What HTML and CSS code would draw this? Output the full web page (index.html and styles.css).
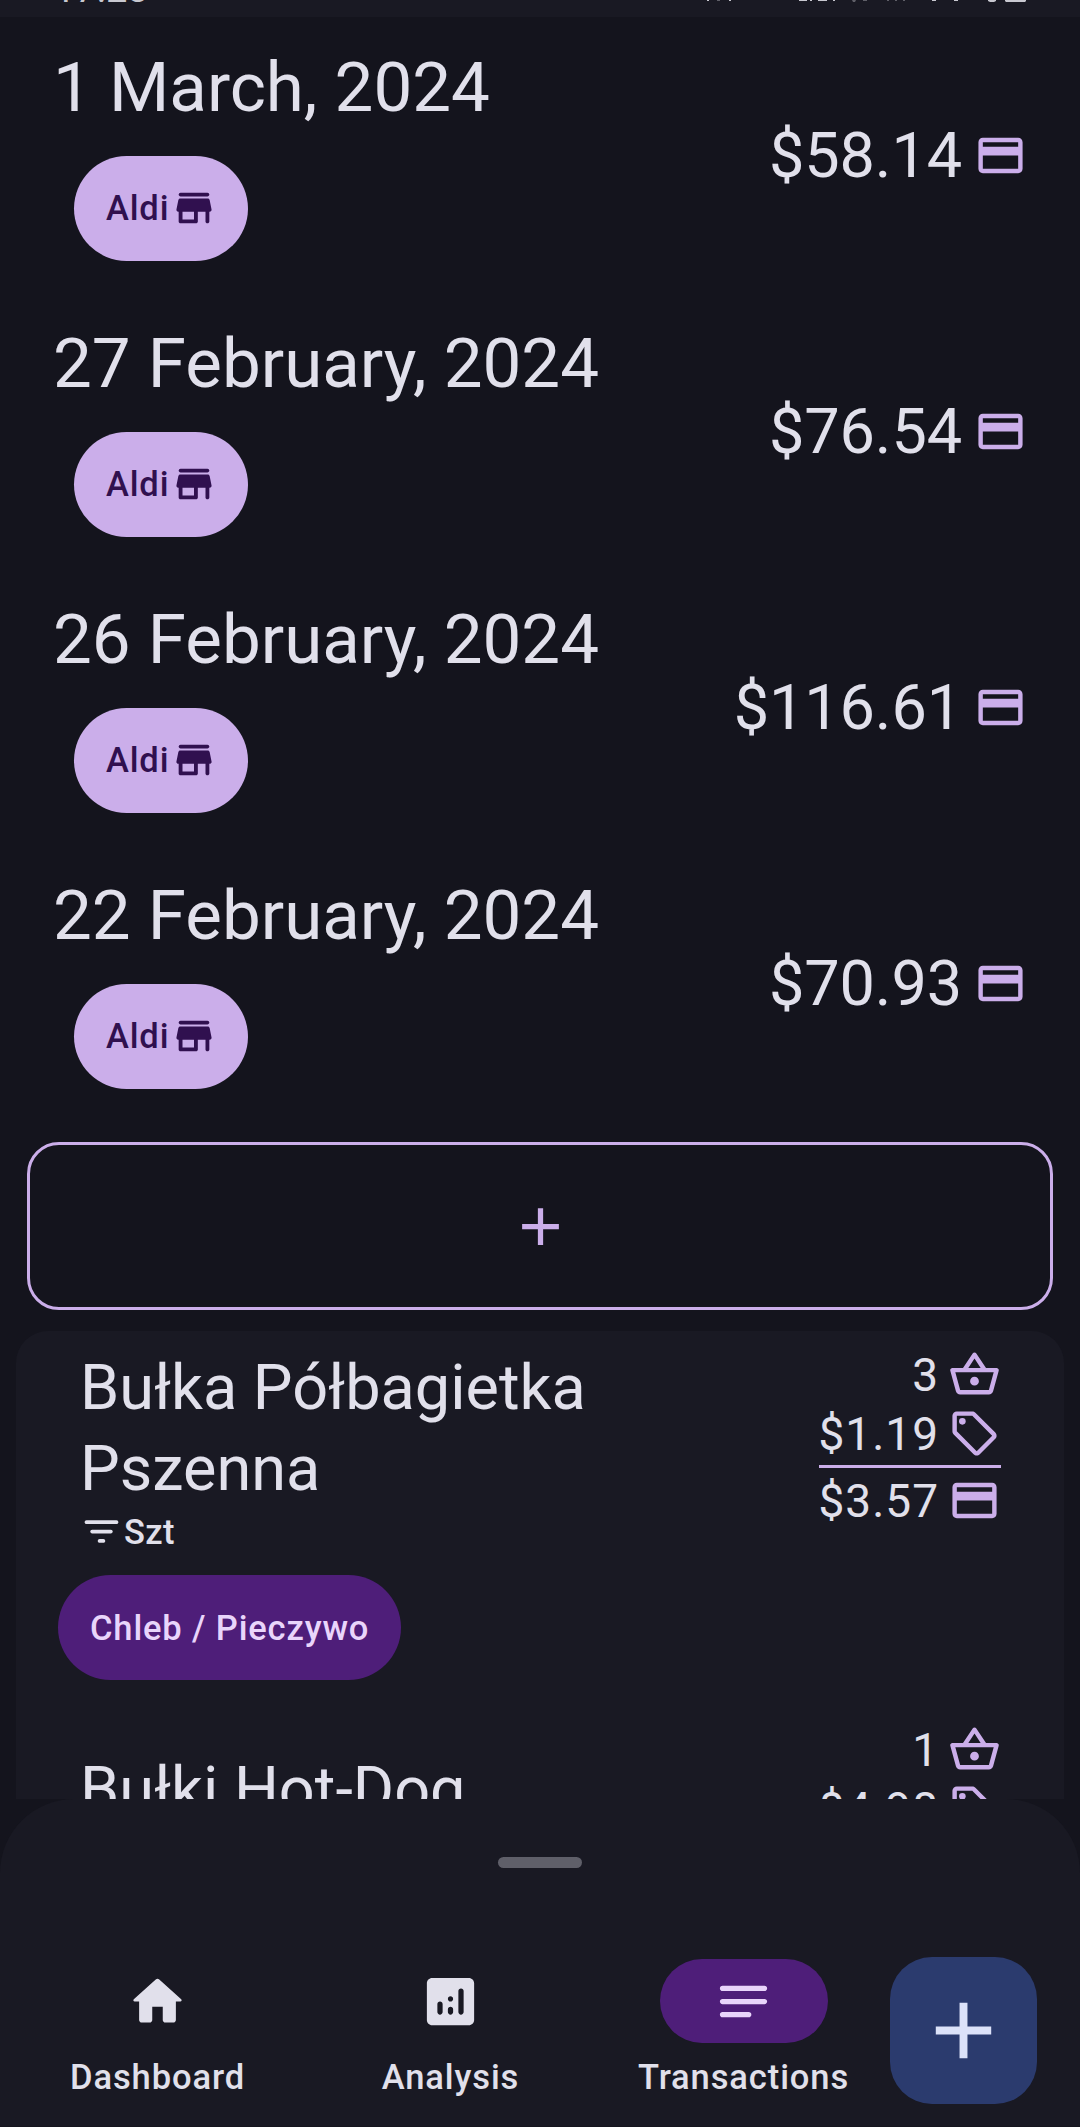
FILE: index.html
```
<!DOCTYPE html>
<html lang="en">
<head>
<meta charset="utf-8">
<title>Transactions</title>
<link rel="stylesheet" href="styles.css">
</head>
<body>
<svg class="sprite" aria-hidden="true">
  <symbol id="store" viewBox="0 0 24 24"><path d="M5 6h14c.55 0 1-.45 1-1s-.45-1-1-1H5c-.55 0-1 .45-1 1s.45 1 1 1zm15.16 1.8c-.09-.46-.5-.8-.98-.8H4.82c-.48 0-.89.34-.98.8l-1 5c-.12.62.35 1.2.98 1.2H4v5c0 .55.45 1 1 1h8c.55 0 1-.45 1-1v-5h4v5c0 .55.45 1 1 1s1-.45 1-1v-5h.18c.63 0 1.1-.58.98-1.2l-1-5zM12 18H6v-4h6v4z"/></symbol>
  <symbol id="card" viewBox="0 0 24 24"><path d="M20 4H4c-1.11 0-1.99.89-1.99 2L2 18c0 1.11.89 2 2 2h16c1.11 0 2-.89 2-2V6c0-1.11-.89-2-2-2zm0 14H4v-6h16v6zm0-10H4V6h16v2z"/></symbol>
  <symbol id="basket" viewBox="0 0 24 24"><path d="M22 9h-4.79l-4.38-6.56c-.19-.28-.51-.42-.83-.42s-.64.14-.83.43L6.79 9H2c-.55 0-1 .45-1 1 0 .09.01.18.04.27l2.54 9.27c.23.84 1 1.46 1.92 1.46h13c.92 0 1.69-.62 1.93-1.46l2.54-9.27L23 10c0-.55-.45-1-1-1zM12 4.8L14.8 9H9.2L12 4.8zM18.5 19l-12.99.01L3.31 11H20.7l-2.2 8zM12 13c-1.1 0-2 .9-2 2s.9 2 2 2 2-.9 2-2-.9-2-2-2z"/></symbol>
  <symbol id="tag" viewBox="0 0 24 24"><path d="M21.41 11.58l-9-9C12.05 2.22 11.55 2 11 2H4c-1.100 0-2 .9-2 2v7c0 .55.22 1.050.59 1.420l9 9c.36.36.86.58 1.410.58s1.050-.22 1.410-.59l7-7c.37-.36.59-.86.59-1.410s-.23-1.060-.59-1.420zM13 20.010L4 11V4h7v-.010l9 9-7 7.020z"/><circle cx="6.500" cy="6.500" r="1.500"/></symbol>
  <symbol id="filter" viewBox="0 0 24 24"><path d="M11 18h2c.55 0 1-.45 1-1s-.45-1-1-1h-2c-.55 0-1 .45-1 1s.45 1 1 1zM3 7c0 .55.45 1 1 1h16c.55 0 1-.45 1-1s-.45-1-1-1H4c-.55 0-1 .45-1 1zm4 6h10c.55 0 1-.45 1-1s-.45-1-1-1H7c-.55 0-1 .45-1 1s.45 1 1 1z"/></symbol>
  <symbol id="plus" viewBox="0 0 24 24"><path d="M19 13h-6v6h-2v-6H5v-2h6V5h2v6h6v2z"/></symbol>
  <symbol id="home" viewBox="0 0 24 24"><path d="M10 19v-5h4v5c0 .55.45 1 1 1h3c.55 0 1-.45 1-1v-7h1.700c.46 0 .68-.57.33-.87L12.670 3.600c-.38-.34-.96-.34-1.340 0l-8.360 7.530c-.34.3-.13.87.33.87H5v7c0 .55.45 1 1 1h3c.55 0 1-.45 1-1z"/></symbol>
  <symbol id="analytics" viewBox="0 0 24 24"><path d="M19 3H5c-1.100 0-2 .9-2 2v14c0 1.100.9 2 2 2h14c1.100 0 2-.9 2-2V5c0-1.100-.9-2-2-2zM8 17c-.55 0-1-.45-1-1v-3c0-.55.45-1 1-1s1 .45 1 1v3c0 .55-.45 1-1 1zm4 0c-.55 0-1-.45-1-1v-1c0-.55.45-1 1-1s1 .45 1 1v1c0 .55-.45 1-1 1zm0-5c-.55 0-1-.45-1-1s.45-1 1-1 1 .45 1 1-.45 1-1 1zm4 5c-.55 0-1-.45-1-1V8c0-.55.45-1 1-1s1 .45 1 1v8c0 .55-.45 1-1 1z"/></symbol>
  <symbol id="notes" viewBox="0 0 24 24"><path d="M20 11H4c-.55 0-1 .45-1 1s.45 1 1 1h16c.55 0 1-.45 1-1s-.45-1-1-1zM4 18h10c.55 0 1-.45 1-1s-.45-1-1-1H4c-.55 0-1 .45-1 1s.45 1 1 1zM20 6H4c-.55 0-1 .45-1 1s.45 1 1 1h16c.55 0 1-.45 1-1s-.45-1-1-1z"/></symbol>
</svg>
<div class="screen">
  <div class="status">
    <span class="clock">17:23</span>
    <svg class="indicators" width="330" height="17" viewBox="700 0 330 17">
      <path d="M707 0h2v1h-2zM729 0h2v1h-2zM799 0h8v1h-8zM810 0h2v1h-2zM818 0h9v1h-9zM833 0h2v1h-2zM932 0h4v1h-4zM954 0h4v1h-4zM988 0h8v1l-2 1h-4l-2-1zM1005 0h21v1l-1 1h-19l-1-1z"/>
      <path opacity=".4" d="M717 0h3v1h-3zM852 0h4l-1 2h-2zM863 0h4v1h-4zM887 0h2v1h-2zM895 0h2v1h-2zM903 0h2v1h-2z"/>
    </svg>
  </div>
  <main class="content">
    <section class="row">
      <div><h2 class="date">1 March, 2024</h2><span class="chip shop">Aldi<svg><use href="#store"/></svg></span></div>
      <div class="total">$58.14<svg><use href="#card"/></svg></div>
    </section>
    <section class="row">
      <div><h2 class="date">27 February, 2024</h2><span class="chip shop">Aldi<svg><use href="#store"/></svg></span></div>
      <div class="total">$76.54<svg><use href="#card"/></svg></div>
    </section>
    <section class="row">
      <div><h2 class="date">26 February, 2024</h2><span class="chip shop">Aldi<svg><use href="#store"/></svg></span></div>
      <div class="total">$116.61<svg><use href="#card"/></svg></div>
    </section>
    <section class="row">
      <div><h2 class="date">22 February, 2024</h2><span class="chip shop">Aldi<svg><use href="#store"/></svg></span></div>
      <div class="total">$70.93<svg><use href="#card"/></svg></div>
    </section>
    <button class="add"><svg><use href="#plus"/></svg></button>
    <section class="items">
      <article class="item">
        <div class="info">
          <h3 class="name">Bułka Półbagietka Pszenna</h3>
          <div class="unit"><svg><use href="#filter"/></svg>Szt</div>
          <span class="chip category">Chleb / Pieczywo</span>
        </div>
        <div class="figures">
          <div class="fig">3<svg><use href="#basket"/></svg></div>
          <div class="fig price">$1.19<svg><use href="#tag"/></svg></div>
          <div class="fig">$3.57<svg><use href="#card"/></svg></div>
        </div>
      </article>
      <article class="item second">
        <div class="info"><h3 class="name">Bułki Hot-Dog</h3></div>
        <div class="figures">
          <div class="fig">1<svg><use href="#basket"/></svg></div>
          <div class="fig price">$4.98<svg><use href="#tag"/></svg></div>
        </div>
      </article>
    </section>
  </main>
  <footer class="sheet">
    <div class="handle"></div>
    <div class="bar">
      <nav class="nav">
        <a class="tab"><span class="tab-icon"><svg><use href="#home"/></svg></span>Dashboard</a>
        <a class="tab"><span class="tab-icon"><svg><use href="#analytics"/></svg></span>Analysis</a>
        <a class="tab active"><span class="tab-icon"><svg><use href="#notes"/></svg></span>Transactions</a>
      </nav>
      <button class="fab"><svg><use href="#plus"/></svg></button>
    </div>
  </footer>
</div>
</body>
</html>
```
FILE: styles.css
```
* { box-sizing: border-box; }
body { margin: 0; background: #14141d; color: #e1e0eb; font-family: Roboto, "Noto Sans", sans-serif; }
h2, h3 { margin: 0; font-weight: 400; }
svg { fill: currentColor; flex: none; display: block; }
button { font: inherit; padding: 0; }
.sprite { display: none; }
.screen { height: 2127px; display: flex; flex-direction: column; overflow: hidden; }
.status { height: 17px; flex: none; display: flex; justify-content: space-between; align-items: flex-start; background: #191923; color: #c8c8d0; overflow: hidden; padding: 0 50px 0 54px; }
.clock { font-size: 38px; line-height: 38px; margin-top: -30px; }
.content { height: 1782px; flex: none; overflow: hidden; }
.row { height: 276px; display: flex; justify-content: space-between; align-items: center; padding: 0 53px 0 53px; }
.date { font-size: 69.1px; line-height: 98px; margin-bottom: 21px; height: 96px; }
.row .chip { margin-left: 21px; }
.row > div:first-child { padding-bottom: 11px; }
.chip { display: inline-flex; align-items: center; height: 105px; border-radius: 53px; padding: 0 32px; font-size: 34.5px; font-weight: 500; letter-spacing: .85px; }
.shop { background: #cbaeea; color: #30104f; display: flex; width: 174px; gap: 2px; }
.shop svg { width: 46px; height: 46px; }
.total { display: flex; align-items: center; font-size: 63px; letter-spacing: -.1px; gap: 12px; }
.total svg { width: 53px; height: 53px; color: #cbaeea; }
.add { display: flex; align-items: center; justify-content: center; width: 1026px; height: 168px; margin: 21px 27px; border: 3px solid #cbaeea; border-radius: 32px; background: none; color: #cbaeea; }
.add svg { width: 63px; height: 63px; }
.items { margin: 0 16px; background: #191923; border-radius: 32px 32px 0 0; height: 520px; }
.item { height: 375px; display: flex; justify-content: space-between; padding: 14px 63px 0 42px; }
.name { width: 560px; margin-left: 22px; padding-top: 2px; font-size: 63px; line-height: 81px; }
.unit { display: flex; align-items: center; margin: 0 0 21px 21px; height: 45px; font-size: 34.5px; letter-spacing: .4px; font-weight: 500; }
.unit svg { width: 45px; height: 45px; }
.category { background: #4e1e79; color: #e9d5fb; }
.figures { font-size: 46px; width: 182px; letter-spacing: 1px; }
.fig { height: 59px; display: flex; align-items: center; justify-content: flex-end; gap: 9px; }
.fig svg { width: 53px; height: 53px; color: #cbaeea; }
.price { height: 64px; padding-bottom: 2px; border-bottom: 3px solid #cbaeea; margin-bottom: 3px; }
.second .name { padding-top: 29px; }
.sheet { flex: 1; background: #191923; border-radius: 74px 74px 0 0; border-bottom: 1px solid #15151e; padding-top: 58px; }
.handle { width: 84px; height: 11px; border-radius: 6px; background: #5f5f69; margin: 0 auto; }
.bar { display: flex; padding: 89px 43px 0 11px; justify-content: space-between; }
.nav { display: flex; padding-top: 2px; }
.tab { width: 293px; display: flex; flex-direction: column; align-items: center; font-size: 34.5px; font-weight: 500; letter-spacing: .9px; line-height: 42px; gap: 13px; }
.tab-icon { width: 168px; height: 84px; border-radius: 42px; display: flex; align-items: center; justify-content: center; }
.tab-icon svg { width: 63px; height: 63px; }
.active .tab-icon { background: #4e1e79; color: #e9d5fb; }
.fab { width: 147px; height: 147px; border: 0; border-radius: 42px; background: #2b3b6e; color: #dce2f9; display: flex; align-items: center; justify-content: center; }
.fab svg { width: 95px; height: 95px; }
```
